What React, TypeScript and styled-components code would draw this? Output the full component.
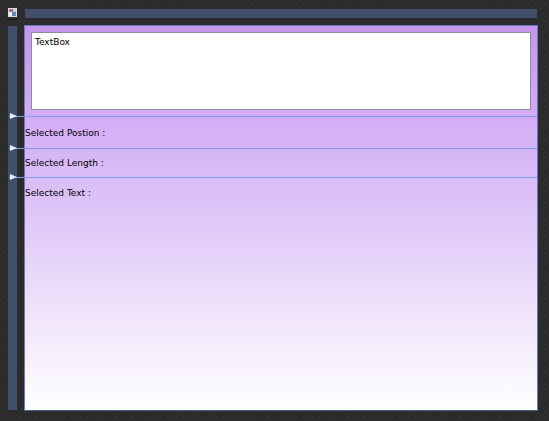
import React from 'react';
import styled, { createGlobalStyle } from 'styled-components';

const lineColor = '#7c9ceb';

const GlobalStyle = createGlobalStyle`
  html, body {
    margin: 0;
    padding: 0;
    background: #2c2c2c;
  }
`;

const Page = styled.div`
  width: 549px;
  height: 421px;
  box-sizing: border-box;
  padding: 9px 11px 10px 8px;
  display: grid;
  grid-template-columns: 9px 1fr;
  grid-template-rows: 9px 1fr;
  column-gap: 7px;
  row-gap: 7px;
  overflow: hidden;
  background-color: #2c2c2c;
  background-image: repeating-linear-gradient(135deg, #2e2e2e 0 2px, #2a2a2a 2px 4px);
  font-family: "DejaVu Sans", sans-serif;
  font-size: 9px;
  color: #000;
`;

const CornerButton = styled.div`
  position: relative;
  width: 9px;
  height: 9px;
  display: flex;
  margin-top: -1px;

  &::after {
    content: '';
    position: absolute;
    left: -1px;
    bottom: -3px;
    width: 10px;
    height: 1px;
    background: repeating-linear-gradient(90deg, #0c0c0c 0 2px, transparent 2px 3px);
  }
`;

const TopRuler = styled.div`
  height: 9px;
  margin-left: 1px;
  margin-right: 1px;
  background: #414e6c;
`;

const LeftRuler = styled.div`
  width: 9px;
  margin-top: 1px;
  margin-bottom: 1px;
  background: #414e6c;
`;

const Canvas = styled.div`
  display: flex;
  flex-direction: column;
  border: 1px solid #6478c8;
  border-bottom-color: #46608f;
  background: linear-gradient(180deg, #c596ea 0%, #d4aef5 25%, #dcc2f7 45%, #eee0fa 72%, #ffffff 100%);
`;

const Row = styled.div<{ $height?: number }>`
  position: relative;
  box-sizing: border-box;
  flex: ${p => (p.$height ? `0 0 ${p.$height}px` : '1')};
  border-bottom: ${p => (p.$height ? `1px solid ${lineColor}` : 'none')};
`;

const TextBoxRow = styled(Row)`
  padding: 6px 6px 0 6px;
`;

const TextBox = styled.div`
  height: 78px;
  box-sizing: border-box;
  padding: 4px 3px;
  background: #fff;
  border: 1px solid #8f8a9c;
  line-height: 11px;
`;

const Label = styled.div<{ $top: number }>`
  padding-top: ${p => p.$top}px;
  line-height: 11px;
  white-space: nowrap;
`;

const GuideStub = styled.span`
  position: absolute;
  left: -16px;
  bottom: -1px;
  width: 16px;
  height: 1px;
  background: ${lineColor};
`;

const GuideArrow = styled.span`
  position: absolute;
  left: 1px;
  top: -3px;
  width: 0;
  height: 0;
  border-top: 3.5px solid transparent;
  border-bottom: 3.5px solid transparent;
  border-left: 7px solid #e4f0ff;
`;

const Guide = () => (
  <GuideStub>
    <GuideArrow />
  </GuideStub>
);

const CornerIcon = () => (
  <CornerButton>
    <svg width="9" height="9" viewBox="0 0 9 9">
      <rect width="9" height="9" fill="#dcdcdc" />
      <rect x="1" y="1" width="4" height="3" fill="#a8707e" />
      <rect x="5" y="1" width="3" height="3" fill="#c4ccd8" />
      <rect x="1" y="4" width="3" height="4" fill="#f0f0f0" />
      <rect x="4" y="4" width="4" height="4" fill="#6488b4" />
    </svg>
  </CornerButton>
);

const App: React.FC = () => {
  return (
    <>
      <GlobalStyle />
      <Page>
        <CornerIcon />
        <TopRuler />
        <LeftRuler />
        <Canvas>
          <TextBoxRow $height={91}>
            <TextBox>TextBox</TextBox>
            <Guide />
          </TextBoxRow>
          <Row $height={32}>
            <Label $top={11}>Selected Postion :</Label>
            <Guide />
          </Row>
          <Row $height={29}>
            <Label $top={9}>Selected Length :</Label>
            <Guide />
          </Row>
          <Row>
            <Label $top={10}>Selected Text :</Label>
          </Row>
        </Canvas>
      </Page>
    </>
  );
};

export default App;
